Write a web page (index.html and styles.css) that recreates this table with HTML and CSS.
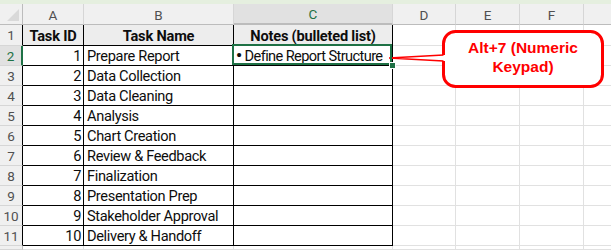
FILE: index.html
```html
<!DOCTYPE html>
<html>
<head>
<meta charset="utf-8">
<link rel="stylesheet" href="styles.css">
</head>
<body>
<div class="page">
  <div class="ribbon-edge"></div>
  <div class="sheet">
    <div class="ch corner"></div>
    <div class="ch">A</div>
    <div class="ch">B</div>
    <div class="ch sel-col">C</div>
    <div class="ch">D</div>
    <div class="ch">E</div>
    <div class="ch">F</div>
    <div class="ch last"></div>

    <div class="rh tl">1</div>
    <div class="c t th">Task ID</div>
    <div class="c t th">Task Name</div>
    <div class="c t th">Notes (bulleted list)</div>
    <div class="c"></div><div class="c"></div><div class="c"></div><div class="c last"></div>

    <div class="rh sel-row">2</div>
    <div class="c t num">1</div>
    <div class="c t">Prepare Report</div>
    <div class="c t active"><span class="bullet">•</span>&nbsp;Define Report Structure<span class="handle"></span></div>
    <div class="c"></div><div class="c"></div><div class="c"></div><div class="c last"></div>

    <div class="rh tl">3</div>
    <div class="c t num">2</div>
    <div class="c t">Data Collection</div>
    <div class="c t"></div>
    <div class="c"></div><div class="c"></div><div class="c"></div><div class="c last"></div>

    <div class="rh tl">4</div>
    <div class="c t num">3</div>
    <div class="c t">Data Cleaning</div>
    <div class="c t"></div>
    <div class="c"></div><div class="c"></div><div class="c"></div><div class="c last"></div>

    <div class="rh tl">5</div>
    <div class="c t num">4</div>
    <div class="c t">Analysis</div>
    <div class="c t"></div>
    <div class="c"></div><div class="c"></div><div class="c"></div><div class="c last"></div>

    <div class="rh tl">6</div>
    <div class="c t num">5</div>
    <div class="c t">Chart Creation</div>
    <div class="c t"></div>
    <div class="c"></div><div class="c"></div><div class="c"></div><div class="c last"></div>

    <div class="rh tl">7</div>
    <div class="c t num">6</div>
    <div class="c t">Review &amp; Feedback</div>
    <div class="c t"></div>
    <div class="c"></div><div class="c"></div><div class="c"></div><div class="c last"></div>

    <div class="rh tl">8</div>
    <div class="c t num">7</div>
    <div class="c t">Finalization</div>
    <div class="c t"></div>
    <div class="c"></div><div class="c"></div><div class="c"></div><div class="c last"></div>

    <div class="rh tl">9</div>
    <div class="c t num">8</div>
    <div class="c t">Presentation Prep</div>
    <div class="c t"></div>
    <div class="c"></div><div class="c"></div><div class="c"></div><div class="c last"></div>

    <div class="rh tl">10</div>
    <div class="c t num">9</div>
    <div class="c t">Stakeholder Approval</div>
    <div class="c t"></div>
    <div class="c"></div><div class="c"></div><div class="c"></div><div class="c last"></div>

    <div class="rh tl">11</div>
    <div class="c t num">10</div>
    <div class="c t">Delivery &amp; Handoff</div>
    <div class="c t"></div>
    <div class="c"></div><div class="c"></div><div class="c"></div><div class="c last"></div>

    <div class="rh"></div>
    <div class="c"></div><div class="c"></div><div class="c"></div>
    <div class="c"></div><div class="c"></div><div class="c"></div><div class="c last"></div>
  </div>

  <svg class="callout" width="611" height="250" viewBox="0 0 611 250">
    <path d="M443.5 43.5 A12 12 0 0 1 455.5 31.5 L590.5 31.5 A12 12 0 0 1 602.5 43.5 L602.5 74.5 A12 12 0 0 1 590.5 86.5 L455.5 86.5 A12 12 0 0 1 443.5 74.5 L443.5 61 L389 58 L443.5 55 Z" fill="#ffffff"/>
    <path d="M443.5 55 L443.5 43.5 A12 12 0 0 1 455.5 31.5 L590.5 31.5 A12 12 0 0 1 602.5 43.5 L602.5 74.5 A12 12 0 0 1 590.5 86.5 L455.5 86.5 A12 12 0 0 1 443.5 74.5 L443.5 61" fill="none" stroke="#ff0000" stroke-width="3"/>
    <path d="M443.5 55 L389 58 L443.5 61" fill="none" stroke="#ff0000" stroke-width="1.3"/>
    <text class="callout-text" x="523" y="53" text-anchor="middle">Alt+7 (Numeric</text>
    <text class="callout-text" x="523" y="72" text-anchor="middle">Keypad)</text>
  </svg>
</div>
</body>
</html>
```

FILE: styles.css
```css
html, body {
  margin: 0;
  padding: 0;
  background: #ffffff;
}

.page {
  position: relative;
  width: 611px;
  height: 250px;
  overflow: hidden;
  font-family: Roboto, "Liberation Sans", sans-serif;
}

.ribbon-edge {
  height: 4px;
  background: #e5efdf;
}

.sheet {
  display: grid;
  grid-template-columns: 23px 61px 150px 159px 63px 64px 64px 1fr;
  grid-template-rows: 21px 21px repeat(10, 20px) 1fr;
  height: 246px;
}

.sheet > div {
  box-sizing: border-box;
  border-right: 1px solid #e1e1e1;
  border-bottom: 1px solid #e1e1e1;
  white-space: nowrap;
  overflow: visible;
}

.sheet > .last {
  border-right: none;
}

/* column headers */
.ch {
  background: #f0f0f0;
  color: #505050;
  font-size: 13.5px;
  display: flex;
  align-items: center;
  justify-content: center;
  padding-top: 1px;
  border-right-color: #d6d6d6 !important;
  border-bottom-color: #bcbcbc !important;
}

.ch.corner {
  position: relative;
  border-right-color: #bcbcbc !important;
}

.ch.corner::after {
  content: "";
  position: absolute;
  right: 3px;
  bottom: 3px;
  width: 12px;
  height: 12px;
  background: #d9d9d9;
  clip-path: polygon(100% 0, 100% 100%, 0 100%);
}

.sheet > .sel-col {
  background: #e1e1e1;
  color: #1e7145;
  border-bottom: 2px solid #1e7145;
}

/* row headers */
.rh {
  background: #f0f0f0;
  color: #505050;
  font-size: 13.5px;
  display: flex;
  align-items: center;
  justify-content: center;
  border-bottom-color: #d6d6d6 !important;
  border-right-color: #bcbcbc !important;
}

.sheet > .rh.tl {
  border-right-color: #000000 !important;
}

.sheet > .sel-row {
  background: #e1e1e1;
  color: #1e7145;
  border-right: 2px solid #1e7145 !important;
}

/* cells */
.c {
  font-size: 14.6px;
  letter-spacing: -0.35px;
  color: #0d0d0d;
  display: flex;
  align-items: center;
  padding: 1px 3px 0 3px;
}

.sheet > .t {
  border-right-color: #000000;
  border-bottom-color: #000000;
}

.c.th {
  background: #ededed;
  font-weight: 700;
  justify-content: center;
  letter-spacing: -0.2px;
}

.c.num {
  justify-content: flex-end;
  padding-right: 2px;
}

.c.active {
  position: relative;
  padding-left: 2px;
  letter-spacing: -0.6px;
}

.bullet {
  font-size: 17px;
  line-height: 1;
  font-weight: 700;
  margin-top: -1px;
}

.c.active::before {
  content: "";
  position: absolute;
  left: -2px;
  top: -2px;
  right: 0;
  bottom: 0;
  border: 2px solid #1e7145;
  z-index: 2;
}

.handle {
  position: absolute;
  right: -3px;
  bottom: -3px;
  width: 5px;
  height: 5px;
  background: #1e7145;
  outline: 1px solid #ffffff;
  z-index: 3;
}

/* callout */
.callout {
  position: absolute;
  left: 0;
  top: 0;
  pointer-events: none;
}

.callout-text {
  font-family: "Liberation Sans", Arial, sans-serif;
  font-weight: 700;
  font-size: 15.5px;
  fill: #ff0000;
}
```
